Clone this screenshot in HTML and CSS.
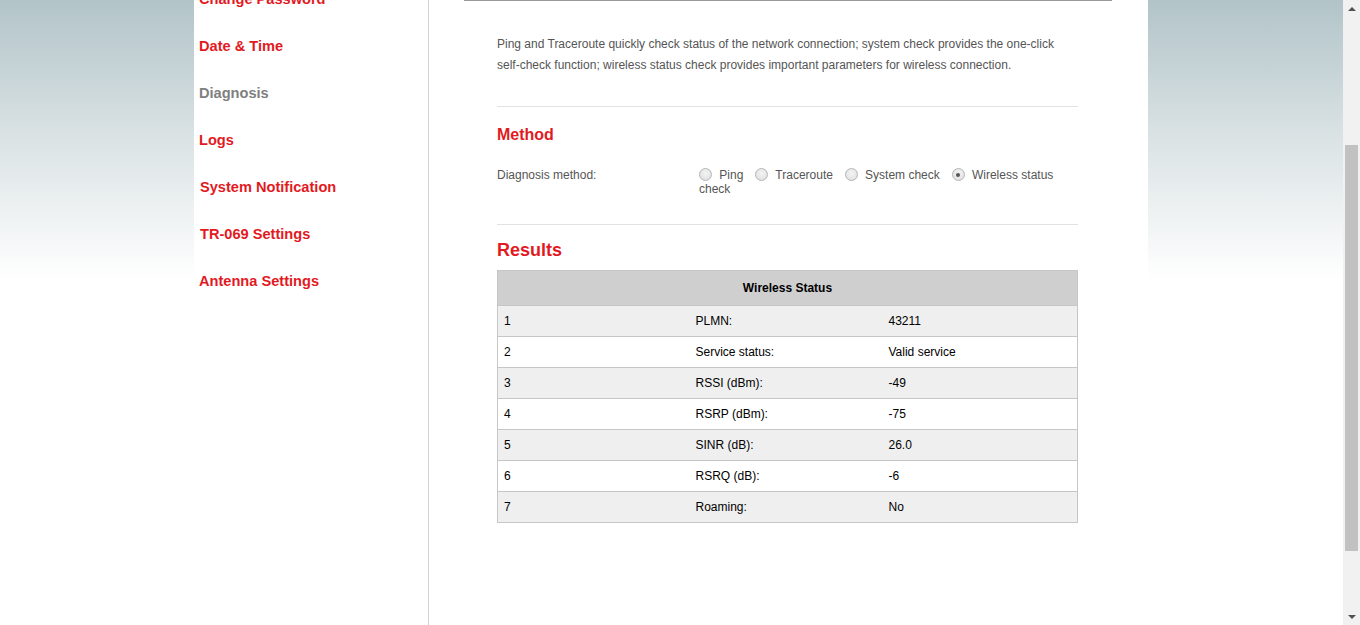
FILE: index.html
```html
<!DOCTYPE html>
<html>
<head>
    <link rel="stylesheet" href="styles.css">
</head>
<body>
<div class="viewport">
    <div class="container">
        <div class="sidebar">
            <ul class="menu">
                <li><a href="#">Change Password</a></li>
                <li><a href="#">Date &amp; Time</a></li>
                <li class="active"><a href="#">Diagnosis</a></li>
                <li><a href="#">Logs</a></li>
                <li class="indent"><a href="#">System Notification</a></li>
                <li class="indent"><a href="#">TR-069 Settings</a></li>
                <li><a href="#">Antenna Settings</a></li>
            </ul>
        </div>
        <div class="main">
            <div class="header-line"></div>
            <div class="content">
                <p class="intro">Ping and Traceroute quickly check status of the network connection; system check provides the one-click self-check function; wireless status check provides important parameters for wireless connection.</p>
                <div class="divider"></div>
                <h2 class="section-title">Method</h2>
                <div class="form-row">
                    <div class="form-label">Diagnosis method:</div>
                    <div class="form-field">
                        <label class="radio"><input type="radio" name="method"> Ping</label>
                        <label class="radio"><input type="radio" name="method"> Traceroute</label>
                        <label class="radio"><input type="radio" name="method"> System check</label>
                        <label class="radio"><input type="radio" name="method" checked> Wireless status check</label>
                    </div>
                </div>
                <div class="divider"></div>
                <h2 class="results-title">Results</h2>
                <table class="status-table">
                    <colgroup>
                        <col class="col-index">
                        <col class="col-name">
                        <col>
                    </colgroup>
                    <tr><th colspan="3">Wireless Status</th></tr>
                    <tr><td>1</td><td>PLMN:</td><td>43211</td></tr>
                    <tr><td>2</td><td>Service status:</td><td>Valid service</td></tr>
                    <tr><td>3</td><td>RSSI (dBm):</td><td>-49</td></tr>
                    <tr><td>4</td><td>RSRP (dBm):</td><td>-75</td></tr>
                    <tr><td>5</td><td>SINR (dB):</td><td>26.0</td></tr>
                    <tr><td>6</td><td>RSRQ (dB):</td><td>-6</td></tr>
                    <tr><td>7</td><td>Roaming:</td><td>No</td></tr>
                </table>
            </div>
        </div>
    </div>
</div>
<div class="scrollbar">
    <div class="scroll-arrow up"></div>
    <div class="scroll-track"><div class="scroll-thumb"></div></div>
    <div class="scroll-arrow down"></div>
</div>
</body>
</html>
```

FILE: styles.css
```css
html, body {
    margin: 0;
    padding: 0;
    height: 625px;
    overflow: hidden;
}

body {
    display: flex;
    font-family: "Liberation Sans", Arial, sans-serif;
    font-size: 12px;
}

.viewport {
    flex: 1;
    height: 625px;
    background: linear-gradient(to bottom, #b2c4c8 0px, #dbe3e5 140px, #ffffff 280px, #ffffff 100%);
}

.container {
    width: 954px;
    height: 625px;
    margin: 0 0 0 194px;
    background-color: #fff;
    display: flex;
}

.sidebar {
    width: 234px;
    border-right: 1px solid #d4d4d4;
}

.menu {
    list-style: none;
    margin: -24px 0 0 0;
    padding: 0 0 0 5px;
}

.menu li {
    height: 47px;
    line-height: 47px;
}

.menu li.indent {
    padding-left: 1px;
}

.menu a {
    color: #e21a1f;
    font-size: 14.6px;
    font-weight: bold;
    text-decoration: none;
}

.menu li.active a {
    color: #808080;
}

.main {
    flex: 1;
    padding: 0 36px 0 35px;
}

.header-line {
    height: 1px;
    background-color: #999;
}

.content {
    padding: 0 34px 0 33px;
}

.intro {
    margin: 33px 0 0 0;
    line-height: 21px;
    color: #555;
}

.divider {
    height: 1px;
    background-color: #e2e2e2;
    margin-top: 30px;
}

.section-title {
    margin: 18px 0 0 0;
    font-size: 16px;
    line-height: 20px;
    color: #e21a1f;
}

.form-row {
    display: flex;
    margin-top: 23px;
    line-height: 14px;
    color: #555;
}

.form-label {
    width: 202px;
    flex-shrink: 0;
}

.form-field {
    flex: 1;
}

.radio {
    margin-right: 8.5px;
}

.radio input {
    appearance: none;
    -webkit-appearance: none;
    box-sizing: border-box;
    width: 13px;
    height: 13px;
    margin: 0 4px 0 0;
    border: 1px solid #b5b5b5;
    border-radius: 50%;
    background: radial-gradient(circle at 50% 40%, #f4f4f4 0%, #dcdcdc 100%);
    vertical-align: -2px;
    position: relative;
}

.radio input:checked::after {
    content: "";
    position: absolute;
    left: 3.5px;
    top: 3.5px;
    width: 4px;
    height: 4px;
    border-radius: 50%;
    background-color: #555;
}

.form-row + .divider {
    margin-top: 28px;
}

.results-title {
    margin: 14px 0 0 0;
    font-size: 18px;
    line-height: 22px;
    color: #e21a1f;
}

.status-table {
    width: 100%;
    margin-top: 9px;
    border-collapse: collapse;
    table-layout: fixed;
    color: #000;
}

.status-table col.col-index {
    width: 192px;
}

.status-table col.col-name {
    width: 193px;
}

.status-table th {
    height: 34px;
    background-color: #cfcfcf;
    border: 1px solid #c6c6c6;
    font-weight: bold;
    text-align: center;
    padding: 0;
}

.status-table td {
    height: 30px;
    padding: 0 6px;
    border-top: 1px solid #c6c6c6;
    border-bottom: 1px solid #c6c6c6;
}

.status-table td:first-child {
    border-left: 1px solid #c6c6c6;
}

.status-table td:last-child {
    border-right: 1px solid #c6c6c6;
}

.status-table tr:nth-child(even) td {
    background-color: #efefef;
}

.scrollbar {
    width: 17px;
    height: 625px;
    background-color: #f1f1f1;
    display: flex;
    flex-direction: column;
}

.scroll-arrow {
    height: 17px;
    display: flex;
    align-items: center;
    justify-content: center;
}

.scroll-arrow.up::before {
    content: "";
    border-left: 4px solid transparent;
    border-right: 4px solid transparent;
    border-bottom: 4px solid #505050;
}

.scroll-arrow.down::before {
    content: "";
    border-left: 4px solid transparent;
    border-right: 4px solid transparent;
    border-top: 4px solid #505050;
}

.scroll-track {
    flex: 1;
    padding-top: 128px;
}

.scroll-thumb {
    width: 13px;
    height: 406px;
    margin-left: 2px;
    background-color: #c1c1c1;
}
```
